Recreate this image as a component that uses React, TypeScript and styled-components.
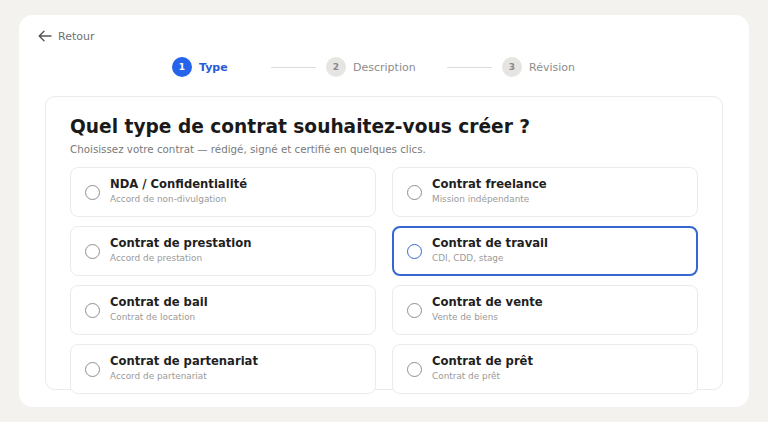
import React, { useState } from "react";
import styled, { createGlobalStyle } from "styled-components";

const GlobalStyle = createGlobalStyle`
  html, body {
    margin: 0;
    padding: 0;
    background: #f3f2ee;
    font-family: "DejaVu Sans", "Liberation Sans", sans-serif;
  }
`;

interface ContractType {
  id: string;
  title: string;
  subtitle: string;
}

const contracts: ContractType[] = [
  { id: "nda", title: "NDA / Confidentialité", subtitle: "Accord de non-divulgation" },
  { id: "freelance", title: "Contrat freelance", subtitle: "Mission indépendante" },
  { id: "prestation", title: "Contrat de prestation", subtitle: "Accord de prestation" },
  { id: "travail", title: "Contrat de travail", subtitle: "CDI, CDD, stage" },
  { id: "bail", title: "Contrat de bail", subtitle: "Contrat de location" },
  { id: "vente", title: "Contrat de vente", subtitle: "Vente de biens" },
  { id: "partenariat", title: "Contrat de partenariat", subtitle: "Accord de partenariat" },
  { id: "pret", title: "Contrat de prêt", subtitle: "Contrat de prêt" },
];

const steps = [
  { num: 1, label: "Type", width: 89 },
  { num: 2, label: "Description", width: 111 },
  { num: 3, label: "Révision", width: 72 },
];

const App: React.FC = () => {
  const [selected, setSelected] = useState("travail");

  return (
    <>
      <GlobalStyle />
      <Page>
        <Shell>
          <BackLink>
            <svg width="14" height="12" viewBox="0 0 14 12" fill="none">
              <path
                d="M13 6H1.5M6 1.2L1.2 6 6 10.8"
                stroke="#555"
                strokeWidth="1.4"
                strokeLinecap="round"
                strokeLinejoin="round"
              />
            </svg>
            Retour
          </BackLink>

          <Stepper>
            {steps.map((s, i) => (
              <React.Fragment key={s.num}>
                {i > 0 && <Connector />}
                <Step $width={s.width}>
                  <StepDot $active={i === 0}>{s.num}</StepDot>
                  <StepLabel $active={i === 0}>{s.label}</StepLabel>
                </Step>
              </React.Fragment>
            ))}
          </Stepper>

          <Panel>
            <Heading>Quel type de contrat souhaitez-vous créer ?</Heading>
            <Lead>Choisissez votre contrat — rédigé, signé et certifié en quelques clics.</Lead>
            <Grid>
              {contracts.map((c) => (
                <Option
                  key={c.id}
                  $selected={selected === c.id}
                  onClick={() => setSelected(c.id)}
                >
                  <Radio $selected={selected === c.id} />
                  <OptionText>
                    <OptionTitle>{c.title}</OptionTitle>
                    <OptionSub>{c.subtitle}</OptionSub>
                  </OptionText>
                </Option>
              ))}
            </Grid>
          </Panel>
        </Shell>
      </Page>
    </>
  );
};

const Page = styled.div`
  padding: 15px 19px;
  height: 422px;
  box-sizing: border-box;
`;

const Shell = styled.div`
  background: #fff;
  border-radius: 14px;
  height: 392px;
  box-sizing: border-box;
  padding: 13px 19px 0;
`;

const BackLink = styled.div`
  display: flex;
  align-items: center;
  gap: 6px;
  font-size: 11px;
  color: #707070;
  height: 16px;
`;

const Stepper = styled.div`
  display: flex;
  align-items: center;
  justify-content: center;
  padding-right: 22px;
  margin-top: 13px;
`;

const Step = styled.div<{ $width: number }>`
  display: flex;
  align-items: center;
  gap: 7px;
  width: ${(p) => p.$width}px;
`;

const StepDot = styled.div<{ $active: boolean }>`
  width: 20px;
  height: 20px;
  border-radius: 50%;
  flex: none;
  display: flex;
  align-items: center;
  justify-content: center;
  font-size: 9px;
  font-weight: bold;
  background: ${(p) => (p.$active ? "#2563eb" : "#e6e5e2")};
  color: ${(p) => (p.$active ? "#fff" : "#8a8a8a")};
`;

const StepLabel = styled.span<{ $active: boolean }>`
  font-size: 11px;
  font-weight: ${(p) => (p.$active ? "bold" : "normal")};
  color: ${(p) => (p.$active ? "#2a5bd7" : "#8c8c8c")};
`;

const Connector = styled.div`
  width: 45px;
  height: 1px;
  background: #dcdcda;
  margin: 0 10px;
`;

const Panel = styled.div`
  margin: 19px 7px 0;
  height: 294px;
  box-sizing: border-box;
  border: 1px solid #ebebea;
  border-radius: 10px;
  padding: 19px 24px 0;
`;

const Heading = styled.h1`
  margin: 0;
  font-size: 18.6px;
  line-height: 22px;
  font-weight: bold;
  color: #1a1a1a;
`;

const Lead = styled.p`
  margin: 5px 0 0;
  font-size: 10.3px;
  line-height: 13px;
  color: #7a7a7a;
`;

const Grid = styled.div`
  display: grid;
  grid-template-columns: 1fr 1fr;
  column-gap: 16px;
  row-gap: 9px;
  margin-top: 11px;
`;

const Option = styled.div<{ $selected: boolean }>`
  display: flex;
  align-items: center;
  gap: 10px;
  height: 50px;
  box-sizing: border-box;
  padding-left: ${(p) => (p.$selected ? 13 : 14)}px;
  background: #fff;
  border: ${(p) => (p.$selected ? "2px solid #3567cf" : "1px solid #ebebea")};
  border-radius: 8px;
  cursor: pointer;
`;

const Radio = styled.span<{ $selected: boolean }>`
  width: 15px;
  height: 15px;
  box-sizing: border-box;
  border-radius: 50%;
  flex: none;
  border: 1.5px solid ${(p) => (p.$selected ? "#3567cf" : "#8f8f8f")};
`;

const OptionText = styled.div`
  display: flex;
  flex-direction: column;
  gap: 3px;
  margin-top: -3px;
`;

const OptionTitle = styled.span`
  font-size: 11.6px;
  font-weight: bold;
  color: #1f1f1f;
`;

const OptionSub = styled.span`
  font-size: 8.9px;
  color: #9a9a9a;
`;

export default App;
